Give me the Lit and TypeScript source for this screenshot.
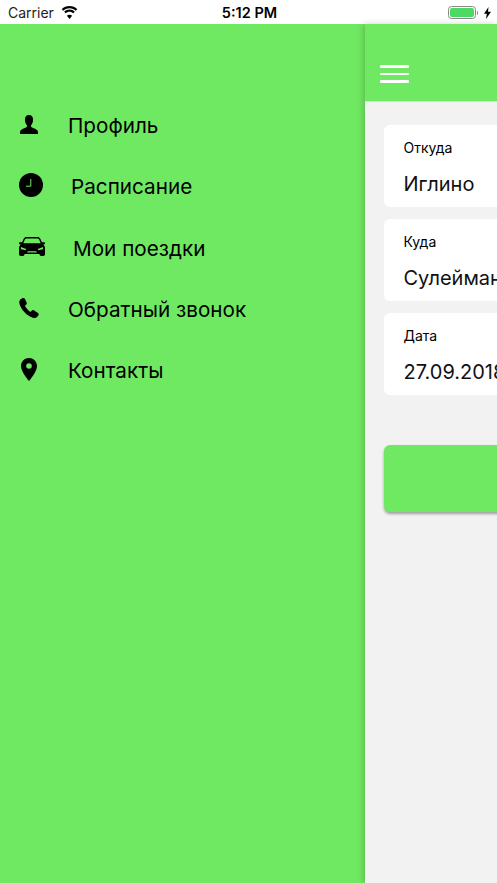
import { LitElement, css, html, svg } from 'lit'
import { customElement } from 'lit/decorators.js'

const icons = {
  person: svg`<svg class="icon person" width="18" height="19" viewBox="0 0 18 19"><path d="M9 0c2.700 0 4.100 2 4.100 4.800 0 2.300-.9 4.200-1.800 5.300-.5.600-.4 1.700.3 2.100 1.800 1 5.300 1.900 6.100 3.600.3.800.3 1.900.3 3.200H0c0-1.300 0-2.400.3-3.200.8-1.700 4.300-2.600 6.100-3.600.7-.4.800-1.500.3-2.100-.9-1.100-1.800-3-1.800-5.300C4.900 2 6.300 0 9 0z"/></svg>`,
  clock: svg`<svg class="icon" width="24" height="24" viewBox="0 0 24 24"><circle cx="12" cy="12" r="12"/><path d="M11.800 6v7.200H7" fill="none" stroke="#70e962" stroke-width="1"/></svg>`,
  car: svg`<svg class="icon" width="26" height="19" viewBox="0 0 26 19"><path fill-rule="evenodd" d="M7.500 0h11c1.300 0 2.200.6 2.800 1.800L23 5.200h2.300c.4 0 .7.300.7.700v.7c0 .4-.3.700-.7.700h-1l1.400 2.200c.2.400.3.800.3 1.200v6.300c0 1.100-.7 2-1.700 2h-2.200c-1 0-1.600-.9-1.600-2h-15c0 1.100-.6 2-1.600 2H1.700C.7 19 0 18.100 0 17v-6.300c0-.4.100-.8.300-1.200l1.400-2.200h-1C.3 7.300 0 7 0 6.600v-.7c0-.4.300-.7.700-.7H3l1.700-3.400C5.300.6 6.200 0 7.500 0zM7.600 1.500c-.8 0-1.300.4-1.700 1.100L4.300 6.200h17.400l-1.600-3.600c-.4-.7-.9-1.100-1.700-1.100H7.600zM2 10v2.200l5 1V12L2 10zm22 0-5 2v1.200l5-1V10zM8.500 14.200v1.300h9v-1.300h-9z"/></svg>`,
  phone: svg`<svg class="icon" width="20" height="20" viewBox="0 0 20 20"><path d="M3.200.3C4.500-.3 5.600.2 6.100 1.300L7.600 4.400C8.100 5.400 7.800 6.300 7 6.900L5.900 7.800C6.700 9.700 9.300 12.800 11.500 13.900L12.600 12.700C13.300 12 14.300 11.900 15.100 12.400L18.700 14.800C19.700 15.500 20 16.600 19.300 17.500L18 19C17 20 15.500 20.200 14 19.700 7.500 17.500 2 11.500.4 5.400 0 3.600.6 2 1.700 1.200z"/></svg>`,
  pin: svg`<svg class="icon pin" width="16" height="23" viewBox="0 0 16 23"><path fill-rule="evenodd" d="M8 0c4.400 0 8 3.500 8 7.900 0 4.700-4.600 10.800-8 15.100C4.600 18.700 0 12.600 0 7.900 0 3.500 3.600 0 8 0zm0 5.200a2.800 2.800 0 1 0 0 5.600 2.800 2.800 0 0 0 0-5.600z"/></svg>`,
}

const menu = [
  { icon: icons.person, label: 'Профиль', slot: 'slot-a' },
  { icon: icons.clock, label: 'Расписание', slot: 'slot-b' },
  { icon: icons.car, label: 'Мои поездки', slot: 'slot-c' },
  { icon: icons.phone, label: 'Обратный звонок', slot: 'slot-a' },
  { icon: icons.pin, label: 'Контакты', slot: 'slot-a' },
]

const fields = [
  { label: 'Откуда', value: 'Иглино' },
  { label: 'Куда', value: 'Сулейманово' },
  { label: 'Дата', value: '27.09.2018' },
]

@customElement('app-root')
export class AppRoot extends LitElement {
  static styles = css`
    :host {
      display: block;
      width: 497px;
      height: 883px;
      overflow: hidden;
      font-family: Inter, "Noto Sans", sans-serif;
      color: #000;
    }
    .status {
      height: 24px;
      background: #fff;
      display: grid;
      grid-template-columns: 1fr auto 1fr;
      align-items: center;
      padding: 1px 6px 0 8px;
      box-sizing: border-box;
      font-size: 14px;
    }
    .status-left {
      display: flex;
      align-items: center;
      gap: 7px;
      color: #222;
    }
    .time {
      font-weight: 600;
      font-size: 14.500px;
    }
    .status-right {
      display: flex;
      justify-content: flex-end;
      align-items: center;
      gap: 6px;
    }
    .battery {
      display: flex;
      align-items: center;
      gap: 1px;
    }
    .battery-body {
      width: 28px;
      height: 13px;
      box-sizing: border-box;
      border: 1px solid #8a8a8a;
      border-radius: 3.500px;
      padding: 1px;
    }
    .battery-fill {
      height: 100%;
      background: #4cd964;
      border-radius: 2px;
    }
    .battery-cap {
      width: 1.500px;
      height: 4px;
      background: #8a8a8a;
      border-radius: 0 1px 1px 0;
    }
    .layout {
      display: flex;
      height: 859px;
    }
    .sidebar {
      width: 365px;
      flex: none;
      background: #70e962;
      padding-top: 71px;
      box-sizing: border-box;
    }
    .nav-item {
      height: 61.250px;
      display: flex;
      align-items: center;
      padding-left: 19px;
      font-size: 20.700px;
    }
    .icon-slot {
      flex: none;
      display: flex;
      margin-bottom: 3px;
    }
    .slot-a { width: 49px; }
    .slot-b { width: 52px; }
    .slot-c { width: 54px; }
    .icon { display: block; fill: #000; }
    .person { margin-left: 1px; }
    .pin { margin-left: 2px; }
    .main {
      flex: 1;
      min-width: 0;
      background: #f2f2f2;
      box-shadow: -2px 0 6px rgba(0, 0, 0, 0.18);
      position: relative;
      overflow: hidden;
    }
    .header {
      height: 77px;
      background: #70e962;
      padding: 41px 0 0 15px;
      box-sizing: border-box;
      box-shadow: 0 1px 1px rgba(0, 0, 0, 0.06);
    }
    .burger {
      width: 29px;
      display: flex;
      flex-direction: column;
      gap: 5px;
    }
    .burger span {
      height: 2.500px;
      background: #fff;
      border-radius: 1px;
    }
    .content {
      width: 375px;
      padding: 24px 19px;
      box-sizing: border-box;
      display: flex;
      flex-direction: column;
      gap: 12px;
    }
    .card {
      height: 82px;
      background: #fff;
      border-radius: 6px;
      padding: 14px 20px 0 19.500px;
      box-sizing: border-box;
    }
    .card-label {
      font-size: 14px;
      line-height: 17px;
    }
    .card-value {
      font-size: 20px;
      line-height: 24px;
      margin-top: 16px;
      white-space: nowrap;
      color: #111;
    }
    .submit {
      height: 67px;
      margin-top: 38px;
      background: #70e962;
      border-radius: 6px;
      box-shadow: 0 2px 3px rgba(0, 0, 0, 0.35);
    }
  `

  render() {
    return html`
      <div class="status">
        <div class="status-left">
          <span>Carrier</span>
          <svg width="17" height="13" viewBox="0 0 17 13">
            <path d="M8.500 2.200c2.500 0 4.700 1 6.300 2.600L16.300 3.200C14.300 1.200 11.500 0 8.500 0S2.700 1.200.7 3.200l1.500 1.600C3.800 3.200 6 2.200 8.500 2.200z"/>
            <path d="M8.500 5.800c1.500 0 2.800.6 3.800 1.500l1.500-1.600C12.400 4.400 10.500 3.600 8.500 3.600S4.600 4.400 3.200 5.700l1.500 1.600c1-.9 2.300-1.500 3.800-1.500z"/>
            <path d="M8.500 13l2.600-3.200c-.7-.6-1.600-1-2.600-1s-1.900.4-2.600 1L8.500 13z"/>
          </svg>
        </div>
        <div class="time">5:12 PM</div>
        <div class="status-right">
          <div class="battery">
            <div class="battery-body"><div class="battery-fill"></div></div>
            <div class="battery-cap"></div>
          </div>
          <svg width="7" height="12" viewBox="0 0 7 12"><path d="M4.500 0 0 6.800h2.800L2 12l5-7.200H4z"/></svg>
        </div>
      </div>
      <div class="layout">
        <nav class="sidebar">
          ${menu.map(
            (item) => html`
              <div class="nav-item">
                <div class="icon-slot ${item.slot}">${item.icon}</div>
                <span>${item.label}</span>
              </div>
            `
          )}
        </nav>
        <div class="main">
          <div class="header">
            <div class="burger"><span></span><span></span><span></span></div>
          </div>
          <div class="content">
            ${fields.map(
              (field) => html`
                <div class="card">
                  <div class="card-label">${field.label}</div>
                  <div class="card-value">${field.value}</div>
                </div>
              `
            )}
            <div class="submit"></div>
          </div>
        </div>
      </div>
    `
  }
}
